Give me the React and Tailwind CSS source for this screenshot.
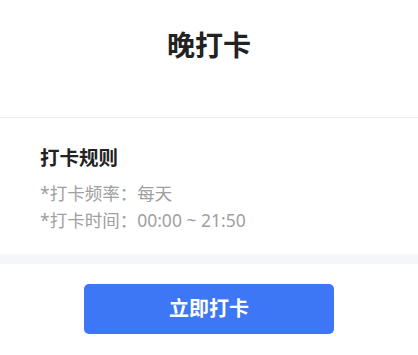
export default function App() {
  const rules = [
    { label: '*打卡频率：', value: '每天' },
    { label: '*打卡时间：', value: '00:00 ~ 21:50' },
  ];

  return (
    <div
      className="w-full min-h-screen bg-white"
      style={{ fontFamily: '"Noto Sans", "Noto Sans CJK SC", sans-serif' }}
    >
      {/* header */}
      <div className="h-[118px] border-b border-[#eeeeee] pt-[25px]">
        <h1 className="text-center text-[28px] leading-[40px] font-bold text-[#222]">晚打卡</h1>
      </div>

      {/* rules */}
      <div className="pt-[27px] pb-[20px] pl-[40px]">
        <h2 className="text-[19.5px] leading-[26px] font-bold text-[#222]">打卡规则</h2>
        <div className="mt-[9px] text-[17.5px] leading-[27px] text-[#a0a0a0]">
          {rules.map(r => (
            <p key={r.label}>{r.label}{r.value}</p>
          ))}
        </div>
      </div>

      <div className="h-[10px] bg-[#f5f6fa]" />

      <div className="flex justify-center pt-[20px]">
        <button className="w-[250px] h-[50px] rounded-[5px] bg-[#3d77f6] text-white text-[20px] font-bold">
          立即打卡
        </button>
      </div>
    </div>
  );
}
